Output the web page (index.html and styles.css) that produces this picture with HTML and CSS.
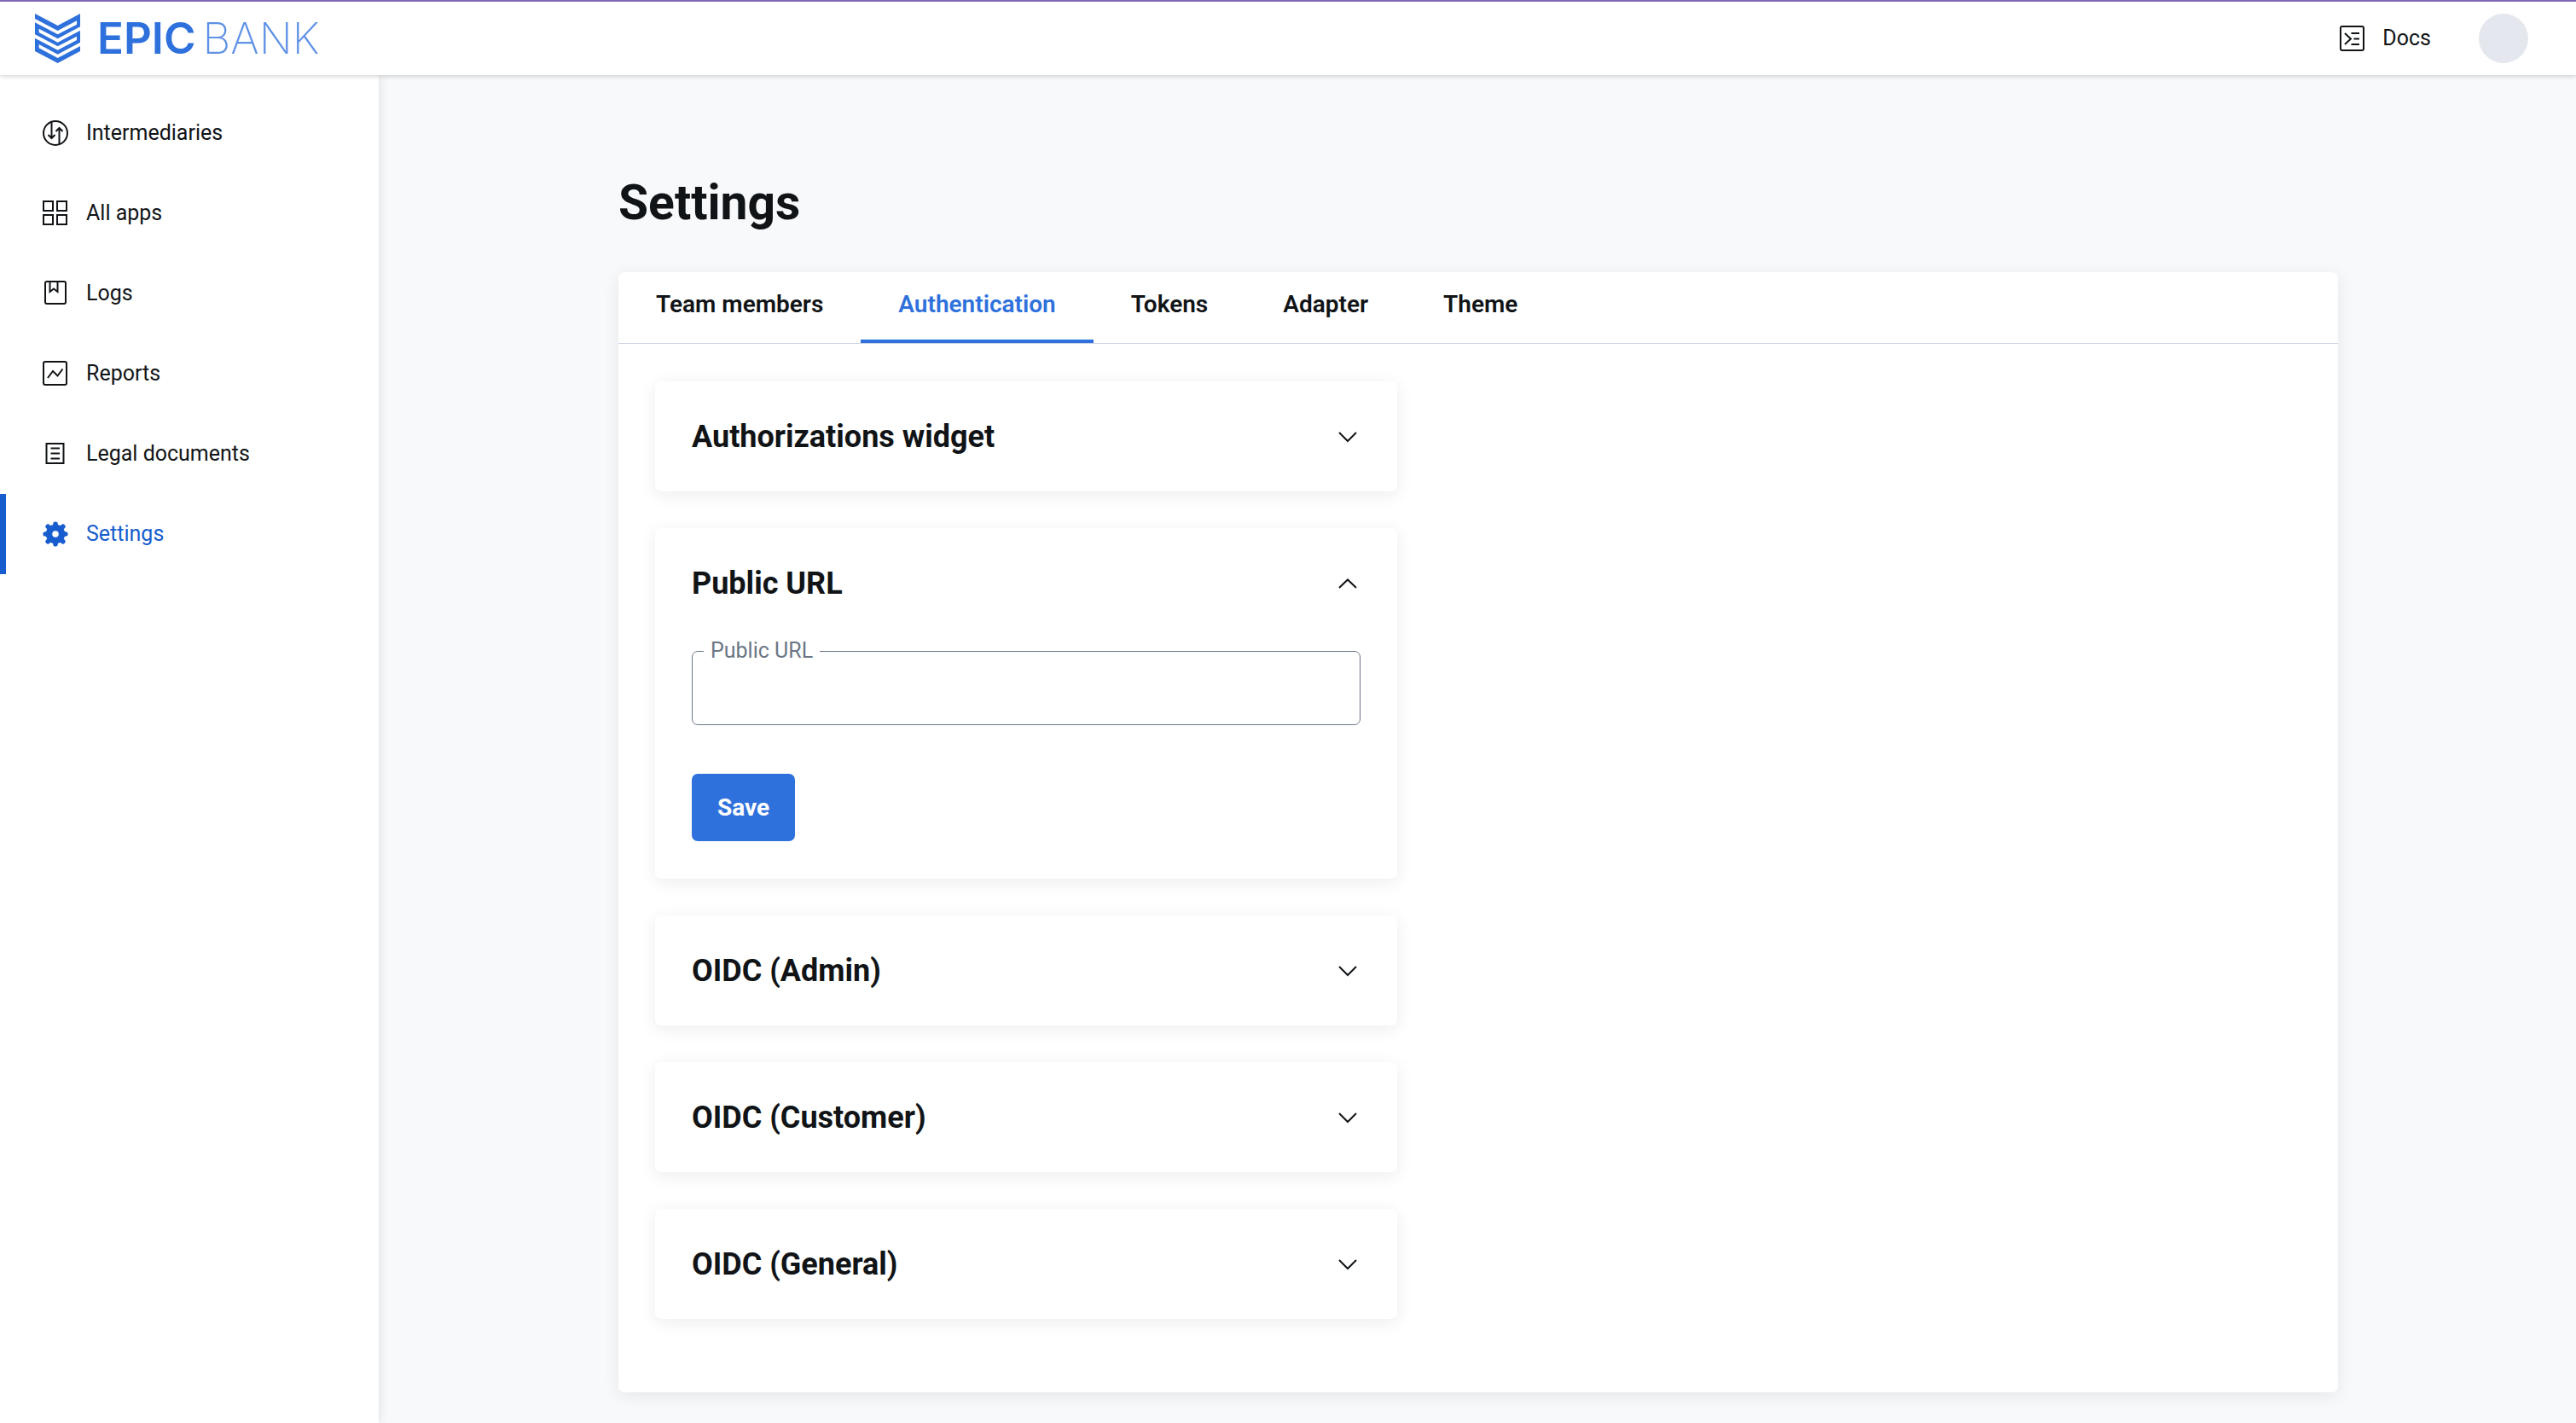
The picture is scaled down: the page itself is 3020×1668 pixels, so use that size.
FILE: index.html
```
<!DOCTYPE html>
<html lang="en">
<head>
  <meta charset="UTF-8">
  <meta name="viewport" content="width=device-width, initial-scale=1.0">
  <title>Settings - EpicBank</title>
  <link rel="stylesheet" href="styles.css">
</head>
<body>

<header class="topbar">
  <a href="#" class="logo">
    <svg class="logo-mark" viewBox="123 48 159 174" aria-hidden="true">
      <path fill-rule="evenodd" d="M123 48 L203 90 L282 48 V180 L203 222 L123 180 Z
        M123 66 L203 108 L270 73 V86 L203 121 L123 79 Z
        M137 101 L203 136 L282 94 V107 L203 149 L137 114 Z
        M123 121 L203 163 L270 128 V141 L203 176 L123 134 Z
        M137 156 L203 191 L282 149 V162 L203 204 L137 169 Z"/>
    </svg>
    <span class="logo-text"><b>EPIC</b><span>BANK</span></span>
  </a>
  <div class="topbar-right">
    <a href="#" class="docs-link">
      <svg class="icon" viewBox="0 0 30 30" aria-hidden="true">
        <rect x="1" y="1" width="27" height="28" rx="2"/>
        <path d="M6 9 L13 15.500 L6 22 M13.500 9 H23 M16.500 15.500 H23 M13.500 22 H23"/>
      </svg>
      Docs
    </a>
    <button type="button" class="avatar" aria-label="Account"></button>
  </div>
</header>

<div class="layout">
  <nav class="sidebar">
    <a href="#" class="nav-item">
      <svg class="icon" viewBox="0 0 30 30" aria-hidden="true">
        <circle cx="15" cy="15" r="14"/>
        <path d="M10.500 2.500 V21 M6.500 17 L10.500 21 L14.500 17 M19.500 28 V9 M15.500 13 L19.500 9 L23.500 13"/>
      </svg>
      Intermediaries
    </a>
    <a href="#" class="nav-item">
      <svg class="icon" viewBox="0 0 30 30" aria-hidden="true">
        <rect x="1" y="1" width="11" height="11"/>
        <rect x="17" y="1" width="11" height="11"/>
        <rect x="1" y="17" width="11" height="11"/>
        <rect x="17" y="17" width="11" height="11"/>
      </svg>
      All apps
    </a>
    <a href="#" class="nav-item">
      <svg class="icon" viewBox="0 0 30 30" aria-hidden="true">
        <rect x="3" y="1" width="24" height="26" rx="2"/>
        <path d="M8.500 1 V13 L13 9.500 L17.500 13 V1"/>
      </svg>
      Logs
    </a>
    <a href="#" class="nav-item">
      <svg class="icon" viewBox="0 0 30 30" aria-hidden="true">
        <rect x="1" y="1" width="27" height="27" rx="2"/>
        <path d="M6 20 L12 12 L17.500 17.500 L23.500 9.500"/>
      </svg>
      Reports
    </a>
    <a href="#" class="nav-item">
      <svg class="icon" viewBox="0 0 30 30" aria-hidden="true">
        <rect x="4.500" y="3" width="20" height="23"/>
        <path d="M9.500 8.500 H20 M9.500 14.500 H20 M9.500 20.500 H20"/>
      </svg>
      Legal documents
    </a>
    <a href="#" class="nav-item active">
      <svg class="icon" viewBox="0 0 30 30" aria-hidden="true">
        <circle cx="15" cy="15" r="7.500" stroke-width="7.500"/>
        <g stroke-width="5.600" stroke-linecap="round">
          <path d="M15 5 V3.200 M15 25 V26.800 M5 15 H3.200 M25 15 H26.800"/>
          <path d="M7.800 7.800 L6.200 6.200 M22.200 7.800 L23.800 6.200 M7.800 22.200 L6.200 23.800 M22.200 22.200 L23.800 23.800"/>
        </g>
      </svg>
      Settings
    </a>
  </nav>

  <main class="content">
    <div class="container">
      <h1>Settings</h1>

      <section class="panel">
        <div class="tabs">
          <a href="#" class="tab">Team members</a>
          <a href="#" class="tab active">Authentication</a>
          <a href="#" class="tab">Tokens</a>
          <a href="#" class="tab">Adapter</a>
          <a href="#" class="tab">Theme</a>
        </div>

        <div class="cards">
          <div class="card">
            <button type="button" class="card-header" aria-expanded="false">
              Authorizations widget
              <svg class="icon" viewBox="0 0 30 30" aria-hidden="true"><path d="M5 10 L15 20 L25 10"/></svg>
            </button>
          </div>

          <div class="card">
            <button type="button" class="card-header" aria-expanded="true">
              Public URL
              <svg class="icon" viewBox="0 0 30 30" aria-hidden="true"><path d="M5 20 L15 10.500 L25 20"/></svg>
            </button>
            <form class="card-body">
              <div class="field">
                <label for="publicUrl">Public URL</label>
                <input type="text" id="publicUrl">
              </div>
              <button type="submit" class="btn-save">Save</button>
            </form>
          </div>

          <div class="card">
            <button type="button" class="card-header" aria-expanded="false">
              OIDC (Admin)
              <svg class="icon" viewBox="0 0 30 30" aria-hidden="true"><path d="M5 10 L15 20 L25 10"/></svg>
            </button>
          </div>

          <div class="card">
            <button type="button" class="card-header" aria-expanded="false">
              OIDC (Customer)
              <svg class="icon" viewBox="0 0 30 30" aria-hidden="true"><path d="M5 10 L15 20 L25 10"/></svg>
            </button>
          </div>

          <div class="card">
            <button type="button" class="card-header" aria-expanded="false">
              OIDC (General)
              <svg class="icon" viewBox="0 0 30 30" aria-hidden="true"><path d="M5 10 L15 20 L25 10"/></svg>
            </button>
          </div>
        </div>
      </section>
    </div>
  </main>
</div>

</body>
</html>
```
FILE: styles.css
```
* {
  box-sizing: border-box;
}
body {
  margin: 0;
  min-height: 100vh;
  display: flex;
  flex-direction: column;
  font-family: Roboto, "Liberation Sans", sans-serif;
  font-size: 25px;
  line-height: 34px;
  color: #111417;
  background: #f7f9fb;
}
a {
  color: inherit;
  text-decoration: none;
}
button, input {
  font: inherit;
  color: inherit;
}
.icon {
  width: 30px;
  height: 30px;
  flex: none;
  fill: none;
  stroke: currentColor;
  stroke-width: 2;
}

/* top bar */
.topbar {
  position: relative;
  z-index: 2;
  display: flex;
  justify-content: space-between;
  align-items: center;
  height: 88px;
  padding: 0 56px 0 41px;
  background: #fff;
  border-top: 2px solid #7f69b5;
  box-shadow: 0 1px 6px rgba(0, 0, 0, 0.2);
}
.logo {
  display: flex;
  align-items: center;
  gap: 20px;
  color: #2f71dc;
}
.logo-mark {
  width: 53px;
  height: 58px;
  fill: currentColor;
}
.logo-text {
  display: flex;
  gap: 8px;
  font-family: Inter, "Liberation Sans", sans-serif;
  font-size: 51px;
}
.logo-text b {
  font-weight: 600;
}
.logo-text span {
  font-weight: 200;
  color: #5f91e6;
}
.topbar-right {
  display: flex;
  align-items: center;
  gap: 56px;
}
.docs-link {
  display: flex;
  align-items: center;
  gap: 20px;
}
.avatar {
  width: 58px;
  height: 58px;
  padding: 0;
  border: 0;
  border-radius: 50%;
  background: #e4e7ed;
}

/* sidebar */
.layout {
  flex: 1;
  display: flex;
}
.sidebar {
  width: 444px;
  flex: none;
  padding-top: 21px;
  background: #fff;
  box-shadow: 0 0 12px rgba(17, 20, 23, 0.12);
}
.nav-item {
  display: flex;
  align-items: center;
  gap: 21px;
  height: 94px;
  padding-left: 43px;
  border-left: 7px solid transparent;
}
.nav-item.active {
  color: #175dce;
  border-left-color: #175dce;
}

/* content */
.content {
  flex: 1;
  padding: 118px 43px 34px 45px;
}
.container {
  max-width: 2016px;
  margin: 0 auto;
}
h1 {
  margin: 0 0 49px;
  font-size: 57px;
  line-height: 64px;
  font-weight: 700;
}
.panel {
  background: #fff;
  border-radius: 7px;
  box-shadow: 0 4px 20px rgba(17, 20, 23, 0.08);
}
.tabs {
  display: flex;
  border-bottom: 1px solid #cbd3df;
}
.tab {
  padding: 21px 44px 24px;
  border-bottom: 4px solid transparent;
  font-size: 28px;
  font-weight: 600;
}
.tab.active {
  color: #2f71dc;
  border-bottom-color: #2f71dc;
}
.cards {
  display: flex;
  flex-direction: column;
  gap: 43px;
  max-width: 956px;
  padding: 44px 43px 86px;
}
.card {
  background: #fff;
  border-radius: 7px;
  box-shadow: 0 4px 20px rgba(17, 20, 23, 0.08);
}
.card-header {
  display: flex;
  justify-content: space-between;
  align-items: center;
  width: 100%;
  height: 129px;
  padding: 0 43px;
  border: 0;
  background: none;
  font-size: 36px;
  font-weight: 700;
  text-align: left;
}
.card-body {
  padding: 15px 43px 44px;
}
.field {
  position: relative;
  margin-bottom: 57px;
}
.field label {
  position: absolute;
  top: -17px;
  left: 14px;
  padding: 0 8px;
  background: #fff;
  color: #6b7785;
}
.field input {
  display: block;
  width: 100%;
  height: 87px;
  padding: 0 22px;
  border: 1px solid #6b7588;
  border-radius: 7px;
  background: none;
}
.btn-save {
  display: block;
  height: 79px;
  padding: 0 30px;
  border: 0;
  border-radius: 7px;
  background: #2f71dc;
  color: #fff;
  font-size: 28px;
  font-weight: 700;
}
```
